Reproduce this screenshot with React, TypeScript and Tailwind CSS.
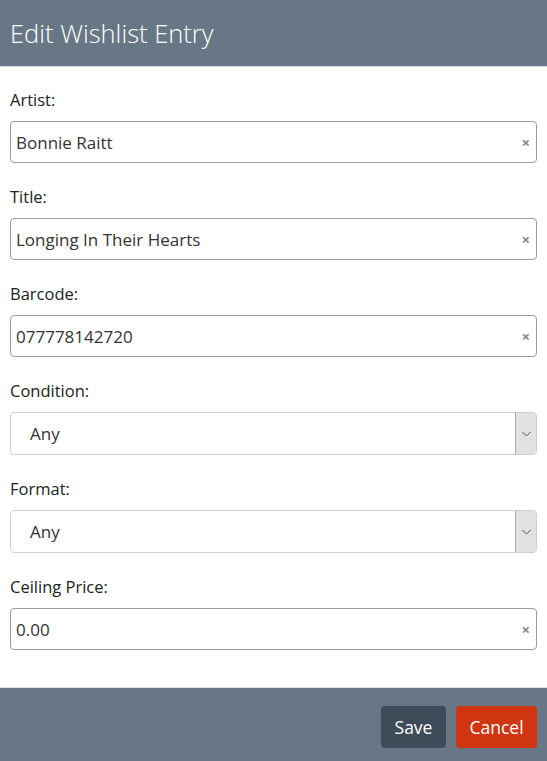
import React from "react";

const font = { fontFamily: '"Open Sans", "Noto Sans", Arial, sans-serif' };

function TextField({ label, value }: { label: string; value: string }) {
  return (
    <div className="flex flex-col">
      <label className="text-[16.5px] leading-[22px] text-[#222] mb-[10px]">{label}</label>
      <div className="relative h-[42px] border border-[#9a9a9a] rounded-[4px] flex items-center pl-[5px] pr-[24px] bg-white">
        <span className="text-[17px] text-[#333] pt-[1px]">{value}</span>
        <span className="absolute right-[6px] top-1/2 -translate-y-1/2 text-[#888] text-[15px] font-bold leading-none">×</span>
      </div>
    </div>
  );
}

function SelectField({ label, value }: { label: string; value: string }) {
  return (
    <div className="flex flex-col">
      <label className="text-[16.5px] leading-[22px] text-[#222] mb-[10px]">{label}</label>
      <div className="h-[43px] border border-[#d0d0d0] rounded-[4px] flex items-stretch bg-white overflow-hidden">
        <span className="flex-1 flex items-center pl-[19px] pt-[1px] text-[17px] text-[#333]">{value}</span>
        <span className="w-[21px] bg-[#e1e1e1] border-l border-[#a8a8a8] flex items-center justify-center">
          <svg width="9" height="6" viewBox="0 0 9 6">
            <path d="M0.5 1 L4.5 5 L8.5 1" fill="none" stroke="#555" strokeWidth="1" />
          </svg>
        </span>
      </div>
    </div>
  );
}

export default function App() {
  return (
    <div className="w-[547px] h-[761px] overflow-hidden bg-white flex flex-col" style={font}>
      <div className="h-[67px] bg-[#687785] border-b border-[#d5dbe2] flex items-center px-[10px] shrink-0">
        <h1 className="text-white text-[25.5px] font-light tracking-[0px]">Edit Wishlist Entry</h1>
      </div>
      <div className="flex flex-col gap-[23px] px-[10px] pt-[22px] pb-[37px]">
        <TextField label="Artist:" value="Bonnie Raitt" />
        <TextField label="Title:" value="Longing In Their Hearts" />
        <TextField label="Barcode:" value="077778142720" />
        <SelectField label="Condition:" value="Any" />
        <SelectField label="Format:" value="Any" />
        <TextField label="Ceiling Price:" value="0.00" />
      </div>
      <div className="flex-1 bg-[#687785] border-t border-[#d5dbe2] flex justify-end items-start gap-[10px] px-[10px] pt-[18px]">
        <button className="h-[42px] w-[65px] rounded-[4px] bg-[#3e4c59] text-white text-[17.5px]">Save</button>
        <button className="h-[42px] w-[81px] rounded-[4px] bg-[#cf3510] text-white text-[17.5px]">Cancel</button>
      </div>
    </div>
  );
}
